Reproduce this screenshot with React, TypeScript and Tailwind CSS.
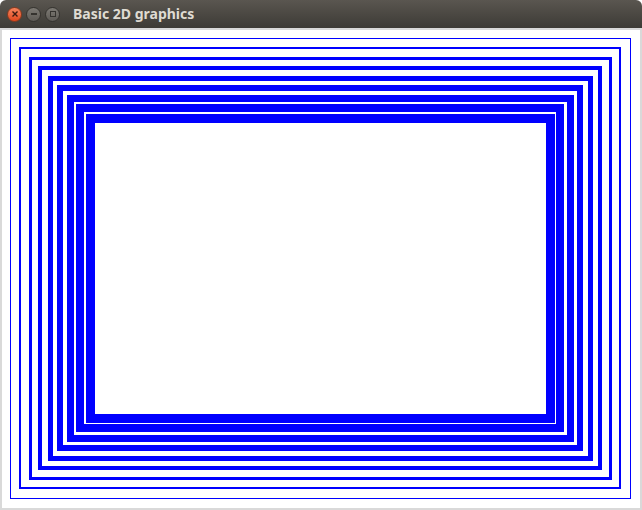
import React from "react";

const frames = [1, 2, 3, 4, 5, 6, 7, 8, 9];

const TitleBar = () => {
  return (
    <div className="flex h-[28px] items-center rounded-t-[6px] bg-gradient-to-b from-[#5a5650] to-[#3d3b36] pl-[7px]">
      <div className="flex items-center gap-[4px]">
        <div className="flex h-[15px] w-[15px] items-center justify-center rounded-full border border-[#8a3a1e] bg-gradient-to-b from-[#f5835c] to-[#e0461a]">
          <svg width="6" height="6" viewBox="0 0 6 6">
            <path d="M0.5 0.5 L5.5 5.5 M5.5 0.5 L0.5 5.5" stroke="#3a1a10" strokeWidth="1.4" />
          </svg>
        </div>
        <div className="flex h-[15px] w-[15px] items-center justify-center rounded-full border border-[#35332f] bg-gradient-to-b from-[#7d7a74] to-[#5e5b56]">
          <div className="h-[2px] w-[6px] bg-[#35332f]" />
        </div>
        <div className="flex h-[15px] w-[15px] items-center justify-center rounded-full border border-[#35332f] bg-gradient-to-b from-[#7d7a74] to-[#5e5b56]">
          <div className="h-[6px] w-[6px] border border-[#35332f]" />
        </div>
      </div>
      <span className="ml-[13px] font-['Noto_Sans',sans-serif] text-[14px] font-bold leading-none text-[#dfdbd2]">
        Basic 2D graphics
      </span>
    </div>
  );
};

const Canvas = () => {
  return (
    <div className="relative h-[482px] bg-white">
      <svg width="642" height="482" className="block" shapeRendering="crispEdges">
        {frames.map((i) => (
          <rect
            key={i}
            x={10 * i + (i % 2) * 0.5}
            y={10 * i + (i % 2) * 0.5}
            width={640 - 20 * i}
            height={480 - 20 * i}
            fill="none"
            stroke="#0000ff"
            strokeWidth={i}
          />
        ))}
      </svg>
      <div className="pointer-events-none absolute inset-0 border-2 border-[#d9d9d9]" />
    </div>
  );
};

const App = () => {
  return (
    <div className="w-[642px] bg-white">
      <TitleBar />
      <Canvas />
    </div>
  );
};

export default App;
